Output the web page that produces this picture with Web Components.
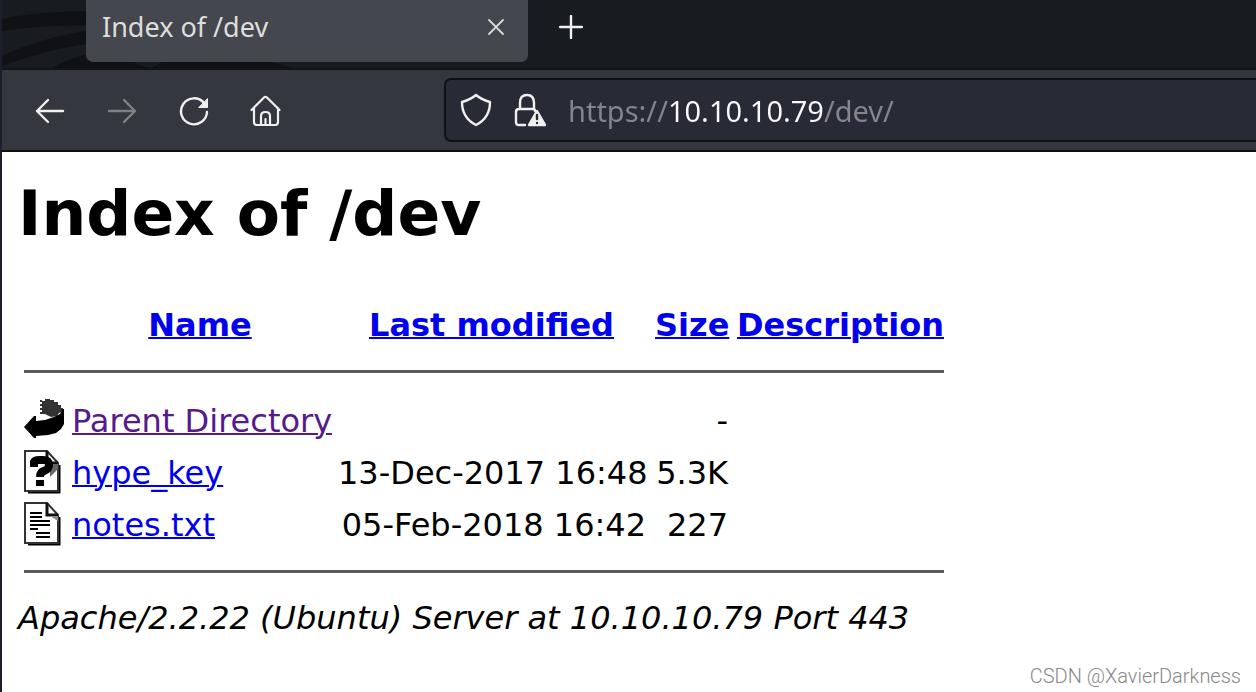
<!DOCTYPE html>
<html lang="en">
<head>
<meta charset="utf-8">
<title>Index of /dev</title>
<style>
  body {
    margin: 0;
    background: #fff;
  }
</style>
</head>
<body>
<browser-window>
  <tab-strip slot="tabs"><browser-tab>Index of /dev</browser-tab></tab-strip>
  <nav-toolbar slot="toolbar" url="https://10.10.10.79/dev/"></nav-toolbar>
  <directory-index>
    <span slot="title">Index of /dev</span>
    <span slot="signature">Apache/2.2.22 (Ubuntu) Server at 10.10.10.79 Port 443</span>
  </directory-index>
  <page-watermark slot="overlay">CSDN @XavierDarkness</page-watermark>
</browser-window>

<script>
class BrowserWindow extends HTMLElement {
  constructor() {
    super();
    this.attachShadow({ mode: "open" }).innerHTML = `
    <style>
      :host {
        display: flex;
        flex-direction: column;
        box-sizing: border-box;
        min-height: 100vh;
        border-left: 2px solid #1b1e2b;
        position: relative;
        overflow: hidden;
      }
      main { flex: 1; }
    </style>
    <slot name="tabs"></slot>
    <slot name="toolbar"></slot>
    <main><slot></slot></main>
    <slot name="overlay"></slot>
  `;
  }
}

class TabStrip extends HTMLElement {
  constructor() {
    super();
    this.attachShadow({ mode: "open" }).innerHTML = `
    <style>
      :host {
        display: grid;
        background: #181b1f;
        border-bottom: 2px solid #121418;
      }
      .swirl, .tabs { grid-area: 1 / 1; }
      .swirl { display: block; }
      .tabs {
        display: flex;
        align-items: flex-start;
        gap: 24px;
        padding: 0 84px 6px;
      }
      button {
        display: flex;
        padding: 7px;
        border: 0;
        background: none;
        margin-top: 8px;
      }
    </style>
    <svg class="swirl" width="340" height="68" viewBox="0 0 340 68" fill="#0f1114" aria-hidden="true">
      <path d="M0 19Q40 11 90 11V25Q40 25 0 31z"/>
      <path d="M0 56Q40 37 90 30V43Q45 49 0 66z"/>
      <path d="M50 68Q68 58 90 53V60H130Q140 68 150 68z"/>
      <path d="M160 62H270L290 68H150z"/>
    </svg>
    <div class="tabs">
      <slot></slot>
      <button aria-label="New tab">
        <svg width="24" height="24" viewBox="0 0 24 24" stroke="#f0f0ee" stroke-width="2.4" stroke-linecap="round"><path d="M12 1v22M1 12h22"/></svg>
      </button>
    </div>
  `;
  }
}

class BrowserTab extends HTMLElement {
  constructor() {
    super();
    this.attachShadow({ mode: "open" }).innerHTML = `
    <style>
      :host {
        display: flex;
        align-items: center;
        justify-content: space-between;
        box-sizing: border-box;
        flex: 0 1 442px;
        height: 62px;
        padding: 0 16px 8px;
        border-radius: 0 0 7px 7px;
        background: #45474e;
        color: #dededd;
        font: 27px/40px "Noto Sans", sans-serif;
      }
      button {
        display: flex;
        padding: 8px;
        border: 0;
        background: none;
      }
    </style>
    <slot></slot>
    <button aria-label="Close tab">
      <svg width="16" height="16" viewBox="0 0 16 16" stroke="#d8d8d8" stroke-width="1.8" stroke-linecap="round"><path d="M1 1l14 14M15 1L1 15"/></svg>
    </button>
  `;
  }
}

class NavToolbar extends HTMLElement {
  constructor() {
    super();
    this.attachShadow({ mode: "open" });
    this.render();
  }

  render() {
    this.shadowRoot.innerHTML = `
    <style>
      :host {
        display: flex;
        align-items: center;
        background: #35373f;
        border-bottom: 2px solid #0e1014;
        padding: 8px 0 8px 32px;
      }
      nav {
        display: flex;
        gap: 40px;
        flex: none;
        width: 410px;
      }
      nav button, .address button {
        display: flex;
        padding: 0;
        border: 0;
        background: none;
      }
      svg {
        fill: none;
        stroke: #f0f0ee;
        stroke-width: 2.4;
        stroke-linecap: round;
        stroke-linejoin: round;
      }
      button:disabled { opacity: 0.4; }
      .address {
        flex: 1;
        display: flex;
        align-items: center;
        gap: 22px;
        box-sizing: border-box;
        height: 64px;
        padding-left: 14px;
        background: #282a36;
        border: 2px solid #101116;
        border-right: 0;
        border-radius: 7px 0 0 7px;
      }
      input {
        flex: 1;
        min-width: 0;
        padding: 2px 0 0;
        border: 0;
        outline: 0;
        color: #fbfbfe;
        font: 29px/40px "Noto Sans", sans-serif;
        /* the host part is brighter than the scheme and the path */
        background: linear-gradient(to right, #85868b 100px, #fbfbfe 100px 255px, #85868b 255px);
        -webkit-background-clip: text;
        background-clip: text;
        -webkit-text-fill-color: transparent;
      }
    </style>
    <nav>
      <button aria-label="Back">
        <svg width="32" height="32" viewBox="0 0 32 32"><path d="M29 17H3M14 6L3 17l11 11"/></svg>
      </button>
      <button aria-label="Forward" disabled>
        <svg width="32" height="32" viewBox="0 0 32 32"><path d="M3 17h26M18 6l11 11-11 11"/></svg>
      </button>
      <button aria-label="Reload">
        <svg width="32" height="32" viewBox="0 0 32 32"><path d="M29 18A13 13 0 1 1 26 9"/><path d="M29.500 5v8.500h-8.500z" fill="#f0f0ee" stroke-width="1"/></svg>
      </button>
      <button aria-label="Home">
        <svg width="32" height="32" viewBox="0 0 32 32"><path d="M1.500 16L14 3.500q1.500-1.400 3 0L29.500 16M4 14v14q0 3 3 3h18q3 0 3-3V14M11 31V22q0-4 4.500-4t4.500 4v9M15.500 25v6" stroke-width="2.200"/></svg>
      </button>
    </nav>
    <div class="address">
      <button aria-label="Tracking protection">
        <svg width="32" height="36" viewBox="0 0 32 36"><path d="M16 3q6 5 14 7 0 16-14 23Q2 26 2 10q8-2 14-7z"/></svg>
      </button>
      <button aria-label="Connection is not secure">
        <svg width="32" height="36" viewBox="0 0 32 36"><path d="M11 33H5q-3 0-3-3V20q0-3 3-3h14q2 0 2 2M6 17v-6q0-8 7-8t7 8v6"/><path d="M23 19l8 14H15z" fill="#f0f0ee"/><path d="M23 23v4M23 31v0" stroke="#282a36"/></svg>
      </button>
      <input type="text" aria-label="Address" value="${this.getAttribute("url") ?? ""}" spellcheck="false">
    </div>
  `;
  }
}

class FileIcon extends HTMLElement {
  constructor() {
    super();
    this.attachShadow({ mode: "open" });
    this.shadowRoot.innerHTML = `
    <style>
      :host { display: block; }
      svg { display: block; }
    </style>
    <svg width="40" height="44" viewBox="0 0 40 44" aria-hidden="true">${this.shapes}</svg>
  `;
  }

  get shapes() {
    const sheet = `
      <path d="M4 42h31V15" fill="none" stroke="#000" stroke-width="3"/>
      <path d="M1 1h22l11 12v28H1z" fill="#fff" stroke="#333" stroke-width="2"/>
      <path d="M23 1v12h11" fill="none" stroke="#111" stroke-width="3"/>`;
    switch (this.getAttribute("type")) {
      case "back":
        return `
      <path d="M18 3h3V1h5v1h4v2h4v3h3v3h2v4l-4 1-2 3-6 1-6-3h-3z" fill="#333"/>
      <path d="M17 2v14" stroke="#333" stroke-width="2" stroke-dasharray="2 2"/>
      <path d="M39 11h1v15l-3 5-5 4-8 2-12 1v2h-2L0 29l10-11h2v5l9-1 9-3 6-3z"/>`;
      case "unknown":
        return `${sheet}
      <path d="M26 14h8v5l-8 8z" fill="#666"/>
      <path d="M10 17v-5q1-2 5-2h4q6 0 6 5 0 4-5 6-4 1-4 6" fill="none" stroke="#000" stroke-width="8"/>
      <path d="M12 30h8v6h-8z"/>`;
      default:
        return `${sheet}
      <path d="M26 14h8v5z" fill="#888"/>
      <path d="M6 11h12M6 15h12M6 19h20M6 23h20M6 27h8M12 31h14M12 35h14" stroke="#000" stroke-width="2"/>`;
    }
  }
}

class DirectoryIndex extends HTMLElement {
  entries = [
    { type: "back", name: "Parent Directory", href: "/", modified: "", size: "-", visited: true },
    { type: "unknown", name: "hype_key", href: "hype_key", modified: "13-Dec-2017 16:48", size: "5.3K" },
    { type: "text", name: "notes.txt", href: "notes.txt", modified: "05-Feb-2018 16:42", size: "227" },
  ];

  constructor() {
    super();
    this.attachShadow({ mode: "open" });
    this.render();
  }

  row(entry) {
    return `
        <tr>
          <td class="icon"><file-icon type="${entry.type}"></file-icon></td>
          <td><a href="${entry.href}" class="${entry.visited ? "visited" : ""}">${entry.name}</a></td>
          <td class="right">${entry.modified}</td>
          <td class="right">${entry.size}</td>
          <td></td>
        </tr>`;
  }

  render() {
    this.shadowRoot.innerHTML = `
    <style>
      :host {
        display: block;
        padding: 24px 16px;
        color: #000;
        font: 32px/40px "DejaVu Sans", sans-serif;
      }
      h1 {
        margin: 0 0 41px;
        font-size: 63px;
        line-height: 76px;
      }
      table {
        table-layout: fixed;
        width: 920px;
        max-width: 100%;
        margin-left: 6px;
        border-collapse: collapse;
      }
      th {
        height: 64px;
        padding: 0 10px 0 0;
        white-space: nowrap;
      }
      td {
        box-sizing: border-box;
        height: 52px;
        padding: 2px 9px 0 0;
        white-space: nowrap;
      }
      td.icon { padding-top: 0; }
      th:last-child, td:last-child { padding-right: 0; }
      td.rule {
        height: auto;
        padding: 0;
      }
      hr {
        margin: 13px 0 21px;
        border: 0;
        border-top: 3px solid #5a5a5a;
      }
      tbody hr { margin: 20px 0; }
      a {
        color: #0000ee;
        text-decoration-thickness: 2px;
      }
      .visited { color: #551a8b; }
      .right { text-align: right; }
      address { margin-top: 5px; }
    </style>
    <h1><slot name="title"></slot></h1>
    <table>
      <colgroup>
        <col style="width: 48px"><col style="width: 266px"><col style="width: 317px"><col style="width: 82px"><col>
      </colgroup>
      <thead>
        <tr>
          <th></th>
          <th><a href="?C=N;O=D">Name</a></th>
          <th><a href="?C=M;O=A">Last modified</a></th>
          <th><a href="?C=S;O=A">Size</a></th>
          <th><a href="?C=D;O=A">Description</a></th>
        </tr>
        <tr><td class="rule" colspan="5"><hr></td></tr>
      </thead>
      <tbody>${this.entries.map((entry) => this.row(entry)).join("")}
        <tr><td class="rule" colspan="5"><hr></td></tr>
      </tbody>
    </table>
    <address><slot name="signature"></slot></address>
  `;
  }
}

class PageWatermark extends HTMLElement {
  constructor() {
    super();
    this.attachShadow({ mode: "open" }).innerHTML = `
    <style>
      :host {
        position: absolute;
        right: 15px;
        bottom: 4px;
        color: #888;
        font: 300 20px/24px Roboto, sans-serif;
      }
    </style>
    <slot></slot>
  `;
  }
}

customElements.define("browser-window", BrowserWindow);
customElements.define("tab-strip", TabStrip);
customElements.define("browser-tab", BrowserTab);
customElements.define("nav-toolbar", NavToolbar);
customElements.define("file-icon", FileIcon);
customElements.define("directory-index", DirectoryIndex);
customElements.define("page-watermark", PageWatermark);
</script>
</body>
</html>
